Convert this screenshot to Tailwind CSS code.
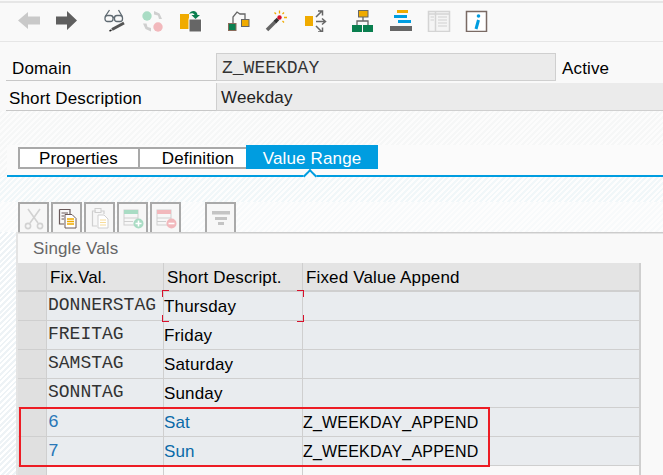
<!DOCTYPE html>
<html lang="en">
<head>
  <meta charset="UTF-8">
  <title>Domain Z_WEEKDAY</title>
  <script src="https://cdn.jsdelivr.net/npm/@tailwindcss/browser@4"></script>
</head>
<body class="bg-[#f9f9f9]">
  <div class="relative w-[663px] h-[475px] overflow-hidden bg-[#f9f9f9] font-['Liberation_Sans',sans-serif] text-[17px] tracking-[0.15px] text-black">

    <!-- toolbar -->
    <div class="h-[41px] border-t-2 border-b border-[#e6e6e6] mt-px flex items-center pl-[17px] pb-[4px]">
      <svg width="24" height="24" viewBox="0 0 24 24"><path d="M1 12.500 L11 4 V8.500 H23 V16.500 H11 V21Z" fill="#c9c9c9"/></svg>
      <svg class="ml-[14px]" width="24" height="24" viewBox="0 0 24 24"><path d="M22 12.500 L12 3 V8.500 H1 V16.500 H12 V22Z" fill="#5f5f5f"/></svg>
      <svg class="ml-[24px]" width="24" height="24" viewBox="0 0 24 24" fill="none" stroke="#5f6a72" stroke-width="1.300"><rect x="2" y="7.500" width="8" height="6" rx="2.500"/><rect x="11.500" y="7.500" width="8" height="6" rx="2.500"/><path d="M10 9.500 H11.500 M2.500 8 L6.500 2 M19 8 L15.500 2"/><path d="M9 21.500 L21 15" stroke="#555" stroke-width="3"/><path d="M6.500 23 L8.500 22" stroke="#222" stroke-width="1.500"/></svg>
      <svg class="ml-[13px]" width="24" height="24" viewBox="0 0 24 24"><circle cx="7" cy="8" r="4.700" fill="#a9dcc4"/><circle cx="18" cy="19" r="4.700" fill="#f2b8bc"/><path d="M14 3 L19.500 5.500 L22 11 H19 L18 7.500 L14 6.500Z M11 23.500 L5.500 21 L3 15.500 H6.500 L7.500 19 L11 20Z" fill="#cfcfcf"/></svg>
      <svg class="ml-[15px]" width="24" height="24" viewBox="0 0 24 24"><rect x="1" y="6" width="9" height="15" fill="#f0ab00"/><rect x="10" y="11" width="12.500" height="13" fill="#666" stroke="#fff"/><path d="M10 6 C12 2 18 2 18.500 7 H21 L16.500 11 L12.500 7 H15.500 C15 5 12 4.500 10 6Z" fill="#0a7f4f"/></svg>
      <svg class="ml-[24px]" width="24" height="24" viewBox="0 0 24 24" fill="none"><path d="M6 15 V9 L10 4 L13 6 H18 V11" stroke="#666" stroke-width="1.300"/><rect x="1.500" y="15.500" width="7.500" height="7" fill="#0a7f4f" stroke="#8a6a5a"/><rect x="14.500" y="11.500" width="7.500" height="7" fill="#f0ab00" stroke="#666"/></svg>
      <svg class="ml-[14px]" width="24" height="24" viewBox="0 0 24 24" fill="none"><path d="M2 22 L11 13" stroke="#666" stroke-width="3.600"/><path d="M10 14 L13 11" stroke="#333" stroke-width="3.600"/><circle cx="14.500" cy="9.500" r="2.200" fill="#d8102c"/><path d="M14.500 2.500 V5.500 M19 4.500 L17.500 6 M22 9.500 H19 M19 14.500 L17.500 13 M9.500 4.500 L11 6" stroke="#f0ab00" stroke-width="1.300"/></svg>
      <svg class="ml-[15px]" width="24" height="24" viewBox="0 0 24 24" fill="none"><rect x="1" y="8" width="8" height="10" fill="#f0ab00"/><path d="M12 13.500 H21 M18 10.500 L21.500 13.500 L18 16.500 M12 9 L18 3 M14 3 H18.500 V7.500 M12 18 L18 24 M14 24 H18.500 V19.500" stroke="#666" stroke-width="1.500"/></svg>
      <svg class="ml-[23px]" width="24" height="24" viewBox="0 0 24 24" fill="none"><rect x="7.500" y="2.500" width="9.500" height="6.500" fill="#f0ab00" stroke="#666"/><path d="M12 9 V13 M6 17 V13 H17 V17" stroke="#666" stroke-width="1.300"/><rect x="1" y="17" width="10" height="7" fill="#0a7f4f"/><rect x="12" y="17" width="10" height="7" fill="#0a7f4f"/></svg>
      <svg class="ml-[14px]" width="24" height="24" viewBox="0 0 24 24"><rect x="8" y="2" width="11" height="3" fill="#f0ab00"/><rect x="5" y="7" width="13" height="3" fill="#009de0"/><rect x="9" y="12" width="13" height="3" fill="#009de0"/><path d="M1 23 V18 H23 V23Z" fill="#666"/></svg>
      <svg class="ml-[14px]" width="24" height="24" viewBox="0 0 24 24" fill="none"><rect x="1.500" y="3.500" width="21" height="20" fill="#f4f4f4" stroke="#d4d4d4" stroke-width="1.500"/><path d="M1.500 6 H22.500 M8.500 4 V23" stroke="#d4d4d4" stroke-width="1.500"/><path d="M3.500 9 H7 M3.500 12 H7 M11 9 H20 M11 12 H20 M11 15 H20 M11 18 H20" stroke="#d0d0d0"/></svg>
      <svg class="ml-[14px]" width="24" height="24" viewBox="0 0 24 24" fill="none"><rect x="1.500" y="3.500" width="20" height="20" fill="#fff" stroke="#7a6a64" stroke-width="1.500"/><circle cx="13.500" cy="8" r="1.800" fill="#009de0"/><path d="M13.500 12 L11 21" stroke="#009de0" stroke-width="3"/></svg>
    </div>

    <!-- header fields -->
    <div class="ml-[6px] mt-[11px] flex h-[28px]">
      <div class="w-[210px] border-b border-[#c8c8c8] pl-[6px] leading-[32px]">Domain</div>
      <div class="w-[340px] bg-[#ebebeb] border border-[#cfcfcf] pl-[5px] font-['Liberation_Mono',monospace] text-[18px] tracking-normal leading-[28px] text-[#333]">Z_WEEKDAY</div>
      <div class="pl-[6px] leading-[32px]">Active</div>
    </div>
    <div class="ml-[6px] mt-[2px] flex h-[28px]">
      <div class="w-[210px] border-b border-[#c8c8c8] pl-[3px] leading-[32px]">Short Description</div>
      <div class="flex-1 bg-[#ebebeb] border-l border-b border-[#cfcfcf] pl-[4px] leading-[30px] text-[#222]">Weekday</div>
    </div>

    <!-- tabs -->
    <div class="relative h-[66px] bg-[repeating-linear-gradient(135deg,#f6f7f7,#f6f7f7_2px,#fcfcfc_2px,#fcfcfc_4px)]">
      <div class="absolute left-[7px] right-0 top-[34px] h-[30px] bg-[#fbfbfb]"></div>
      <div class="absolute left-[18px] top-[36px] w-[121px] h-[22px] border-2 border-r-0 border-[#a9a9a9] bg-white pr-[2px] text-center leading-[20px]">Properties</div>
      <div class="absolute left-[138px] top-[36px] w-[108px] h-[22px] border-2 border-r-0 border-[#a9a9a9] bg-white pl-[10px] text-center leading-[20px]">Definition</div>
      <div class="absolute left-[246px] top-[34px] w-[132px] h-[24px] bg-[#009de0] text-white text-center leading-[28px]">Value Range</div>
      <div class="absolute left-[7px] right-0 top-[64px] h-[2px] bg-[#009de0]"></div>
      <div class="absolute left-[305px] top-[60px] w-[10px] h-[10px] rotate-45 border-l-2 border-t-2 border-[#009de0] bg-[#fbfbfb]"></div>
    </div>

    <!-- table toolbar -->
    <div class="h-[25px] bg-[repeating-linear-gradient(135deg,#f1f7f9,#f1f7f9_2px,#fdfdfd_2px,#fdfdfd_4px)]"></div>
    <div class="h-[30px] pl-[18px] flex gap-[2px] bg-[repeating-linear-gradient(135deg,#f8fafb,#f8fafb_2px,#fdfdfd_2px,#fdfdfd_4px)]">
      <div class="w-[31px] h-[30px] border-2 border-b-0 border-[#a9a9a9] bg-[#f7f7f7] flex items-center justify-center">
        <svg width="24" height="24" viewBox="0 0 24 24" fill="none" stroke="#d2d2d2" stroke-width="1.600"><path d="M6 3 L16 17 M18 3 L8 17"/><circle cx="6" cy="20" r="2.600"/><circle cx="18" cy="20" r="2.600"/></svg>
      </div>
      <div class="w-[31px] h-[30px] border-2 border-b-0 border-[#a9a9a9] bg-[#f7f7f7] flex items-center justify-center">
        <svg width="24" height="24" viewBox="0 0 24 24" fill="none"><path d="M4.500 3.500 H15 V8 M4.500 3.500 V18 H9" stroke="#6a5a5a" stroke-width="1.200"/><path d="M6.500 7 H13 M6.500 10 H9 M6.500 13 H9" stroke="#6a5a5a"/><path d="M10 8.500 H17 L21 12.500 V22 H10Z" fill="#fff" stroke="#6a5a5a"/><path d="M12 13 H19 M12 15.500 H19 M12 18 H19" stroke="#f0ab00" stroke-width="1.300"/></svg>
      </div>
      <div class="w-[31px] h-[30px] border-2 border-b-0 border-[#a9a9a9] bg-[#f7f7f7] flex items-center justify-center">
        <svg width="24" height="24" viewBox="0 0 24 24" fill="none"><path d="M8 5 H4.500 V20 H9 M13 5 H16 V8" stroke="#cfcfcf" stroke-width="1.200"/><rect x="7" y="2.500" width="6" height="4" stroke="#cfcfcf"/><path d="M10 9 H16 L20 13 V22 H10Z" fill="#fff" stroke="#cfcfcf"/><path d="M12 14 H18 M12 16.500 H18 M12 19 H18" stroke="#f7dc9a"/></svg>
      </div>
      <div class="w-[31px] h-[30px] border-2 border-b-0 border-[#a9a9a9] bg-[#f7f7f7] flex items-center justify-center">
        <svg width="24" height="24" viewBox="0 0 24 24" fill="none"><rect x="3" y="4" width="14" height="15" stroke="#cfcfcf"/><rect x="3" y="4" width="14" height="4" fill="#a9dcc4"/><path d="M3 12 H17 M3 15.500 H12" stroke="#cfcfcf"/><circle cx="17.500" cy="17.500" r="5" fill="#a9dcc4"/><path d="M14.500 17.500 H20.500 M17.500 14.500 V20.500" stroke="#fff" stroke-width="1.600"/></svg>
      </div>
      <div class="w-[31px] h-[30px] border-2 border-b-0 border-[#a9a9a9] bg-[#f7f7f7] flex items-center justify-center">
        <svg width="24" height="24" viewBox="0 0 24 24" fill="none"><rect x="3" y="4" width="14" height="15" stroke="#cfcfcf"/><rect x="3" y="4" width="14" height="4" fill="#f2b8bc"/><path d="M3 12 H17 M3 15.500 H12" stroke="#cfcfcf"/><circle cx="17.500" cy="17.500" r="5" fill="#f2b8bc"/><path d="M14.500 17.500 H20.500" stroke="#fff" stroke-width="1.600"/></svg>
      </div>
      <div class="ml-[22px] w-[31px] h-[30px] border-2 border-b-0 border-[#a9a9a9] bg-[#f7f7f7] flex items-center justify-center">
        <svg width="24" height="24" viewBox="0 0 24 24"><rect x="3" y="5" width="18" height="3.500" fill="#c4c4c4"/><rect x="6" y="11" width="12" height="3" fill="#c4c4c4"/><rect x="9" y="16" width="6" height="3" fill="#c4c4c4"/></svg>
      </div>
    </div>

    <!-- value table -->
    <div class="flex h-[243px]">
      <div class="w-[16px] bg-[repeating-linear-gradient(135deg,#eef3f6,#eef3f6_2px,#ffffff_2px,#ffffff_4px)]"></div>
      <div class="w-[647px] border-l-2 border-[#e4e4e4] bg-[#f9f9f9]">
        <div class="h-[31px] pl-[15px] border-t border-[#cccccc] shadow-[inset_0_1px_0_#e4e4e4] leading-[31px] text-[#666]">Single Vals</div>
        <div class="grid grid-cols-[29px_117px_139px_338px] w-[623px]">
          <div class="h-[29px] bg-[#e0e0e0] border-r border-b-2 border-[#cfcfcf]"></div>
          <div class="h-[29px] bg-[#e4e4e4] border-r border-b-2 border-[#cfcfcf] pl-[3px] leading-[29px]">Fix.Val.</div>
          <div class="h-[29px] bg-[#e4e4e4] border-r border-b-2 border-[#cfcfcf] pl-[3px] leading-[29px]">Short Descript.</div>
          <div class="h-[29px] bg-[#e4e4e4] border-r-2 border-b-2 border-[#cfcfcf] pl-[3px] leading-[29px]">Fixed Value Append</div>

          <div class="h-[29px] bg-[#e0e0e0] border-r border-b border-[#cfcfcf]"></div>
          <div class="h-[29px] bg-[#e9ecef] border-r border-b border-[#cfcfcf] pl-px font-['Liberation_Mono',monospace] text-[18px] tracking-normal leading-[27px] text-[#333]">DONNERSTAG</div>
          <div class="h-[29px] bg-[#e9ecef] border-r border-b border-[#cfcfcf] leading-[30px]">Thursday</div>
          <div class="h-[29px] bg-[#e9ecef] border-r-2 border-b border-[#cfcfcf]"></div>

          <div class="h-[29px] bg-[#e0e0e0] border-r border-b border-[#cfcfcf]"></div>
          <div class="h-[29px] bg-[#e9ecef] border-r border-b border-[#cfcfcf] pl-px font-['Liberation_Mono',monospace] text-[18px] tracking-normal leading-[27px] text-[#333]">FREITAG</div>
          <div class="h-[29px] bg-[#e9ecef] border-r border-b border-[#cfcfcf] leading-[30px]">Friday</div>
          <div class="h-[29px] bg-[#e9ecef] border-r-2 border-b border-[#cfcfcf]"></div>

          <div class="h-[29px] bg-[#e0e0e0] border-r border-b border-[#cfcfcf]"></div>
          <div class="h-[29px] bg-[#e9ecef] border-r border-b border-[#cfcfcf] pl-px font-['Liberation_Mono',monospace] text-[18px] tracking-normal leading-[27px] text-[#333]">SAMSTAG</div>
          <div class="h-[29px] bg-[#e9ecef] border-r border-b border-[#cfcfcf] leading-[30px]">Saturday</div>
          <div class="h-[29px] bg-[#e9ecef] border-r-2 border-b border-[#cfcfcf]"></div>

          <div class="h-[29px] bg-[#e0e0e0] border-r border-b border-[#cfcfcf]"></div>
          <div class="h-[29px] bg-[#e9ecef] border-r border-b border-[#cfcfcf] pl-px font-['Liberation_Mono',monospace] text-[18px] tracking-normal leading-[27px] text-[#333]">SONNTAG</div>
          <div class="h-[29px] bg-[#e9ecef] border-r border-b border-[#cfcfcf] leading-[30px]">Sunday</div>
          <div class="h-[29px] bg-[#e9ecef] border-r-2 border-b border-[#cfcfcf]"></div>

          <div class="h-[29px] bg-[#e0e0e0] border-r border-b border-[#cfcfcf]"></div>
          <div class="h-[29px] bg-[#e9ecef] border-r border-b border-[#cfcfcf] pl-px font-['Liberation_Mono',monospace] text-[18px] tracking-normal leading-[28px] text-[#2a78b8]">6</div>
          <div class="h-[29px] bg-[#e9ecef] border-r border-b border-[#cfcfcf] leading-[30px] text-[#0a6aa8]">Sat</div>
          <div class="h-[29px] bg-[#e9ecef] border-r-2 border-b border-[#cfcfcf] text-[16px] tracking-[0.2px] leading-[30px]">Z_WEEKDAY_APPEND</div>

          <div class="h-[29px] bg-[#e0e0e0] border-r border-b border-[#cfcfcf]"></div>
          <div class="h-[29px] bg-[#e9ecef] border-r border-b border-[#cfcfcf] pl-px font-['Liberation_Mono',monospace] text-[18px] tracking-normal leading-[28px] text-[#2a78b8]">7</div>
          <div class="h-[29px] bg-[#e9ecef] border-r border-b border-[#cfcfcf] leading-[30px] text-[#0a6aa8]">Sun</div>
          <div class="h-[29px] bg-[#e9ecef] border-r-2 border-b border-[#cfcfcf] text-[16px] tracking-[0.2px] leading-[30px]">Z_WEEKDAY_APPEND</div>

          <div class="h-[29px] bg-[#e0e0e0] border-r border-[#cfcfcf]"></div>
          <div class="h-[29px] bg-[#f9f9f9] border-r border-[#cfcfcf]"></div>
          <div class="h-[29px] bg-[#f9f9f9] border-r border-[#cfcfcf]"></div>
          <div class="h-[29px] bg-[#f9f9f9] border-r-2 border-[#cfcfcf]"></div>
        </div>
      </div>
    </div>

    <!-- focus corners on the Thursday cell -->
    <div class="absolute left-[162px] top-[290px] w-[7px] h-[7px] border-l border-t border-[#d8102c]"></div>
    <div class="absolute left-[297px] top-[290px] w-[7px] h-[7px] border-r border-t border-[#d8102c]"></div>
    <div class="absolute left-[162px] top-[315px] w-[7px] h-[7px] border-l border-b border-[#d8102c]"></div>
    <div class="absolute left-[297px] top-[315px] w-[7px] h-[7px] border-r border-b border-[#d8102c]"></div>

    <!-- red highlight -->
    <div class="absolute left-[19px] top-[407px] w-[471px] h-[60px] border-2 border-[#ed1c24]"></div>
  </div>
</body>
</html>
